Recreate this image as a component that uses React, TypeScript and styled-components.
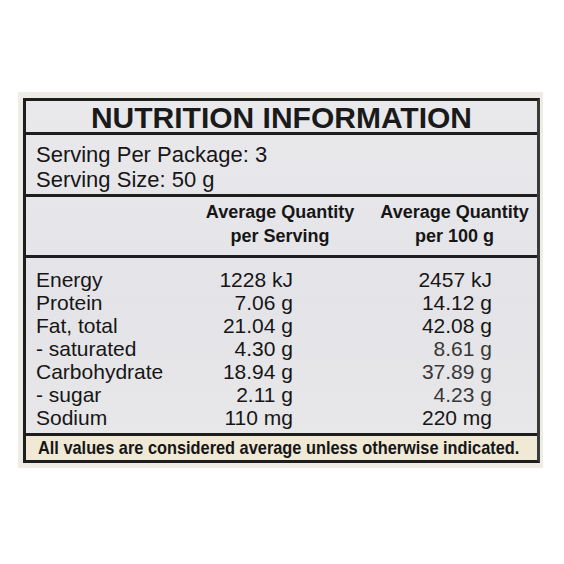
import React from "react";
import styled, { createGlobalStyle } from "styled-components";

const GlobalStyle = createGlobalStyle`
  html, body {
    margin: 0;
    padding: 0;
    background: #ffffff;
  }
  body {
    font-family: "Liberation Sans", Arial, sans-serif;
    color: #161616;
  }
`;

type Nutrient = {
  name: string;
  perServing: string;
  per100: string;
  light?: boolean;
};

const nutrients: Nutrient[] = [
  { name: "Energy", perServing: "1228 kJ", per100: "2457 kJ" },
  { name: "Protein", perServing: "7.06 g", per100: "14.12 g" },
  { name: "Fat, total", perServing: "21.04 g", per100: "42.08 g" },
  { name: "- saturated", perServing: "4.30 g", per100: "8.61 g", light: true },
  { name: "Carbohydrate", perServing: "18.94 g", per100: "37.89 g", light: true },
  { name: "- sugar", perServing: "2.11 g", per100: "4.23 g", light: true },
  { name: "Sodium", perServing: "110 mg", per100: "220 mg" },
];

const App = () => {
  return (
    <>
      <GlobalStyle />
      <Paper>
        <Frame>
          <Title>NUTRITION INFORMATION</Title>
          <Serving>
            <div>Serving Per Package: 3</div>
            <div>Serving Size: 50 g</div>
          </Serving>
          <HeaderRow>
            <span />
            <HeadCell>
              Average Quantity
              <br />
              per Serving
            </HeadCell>
            <HeadCell className="last">
              Average Quantity
              <br />
              per 100 g
            </HeadCell>
          </HeaderRow>
          <Body>
            {nutrients.map((n) => (
              <Row key={n.name}>
                <Name>{n.name}</Name>
                <Value>{n.perServing}</Value>
                <Value $light={n.light}>{n.per100}</Value>
              </Row>
            ))}
          </Body>
          <Footer>
            <span>All values are considered average unless otherwise indicated.</span>
          </Footer>
        </Frame>
      </Paper>
    </>
  );
};

export default App;

const Paper = styled.div`
  margin: 92px 0 0 18px;
  width: 525px;
  height: 376px;
  box-sizing: border-box;
  padding: 6px 3px 5px 5px;
  background: #eeede5;
`;

const Frame = styled.div`
  border: 3px solid #1e1e1e;
  border-right-color: #3a3a3a;
  background: linear-gradient(180deg, #e9e9ec 0%, #e4e4e8 55%, #e8e8ea 100%);
  display: flex;
  flex-direction: column;
`;

const Title = styled.div`
  height: 34px;
  box-sizing: border-box;
  padding-top: 3px;
  line-height: 28px;
  font-size: 30px;
  font-weight: 700;
  text-align: center;
  color: #1a1a1a;
  border-bottom: 3px solid #1e1e1e;
`;

const Serving = styled.div`
  height: 62px;
  box-sizing: border-box;
  padding: 7px 0 0 10px;
  font-size: 22px;
  line-height: 25px;
  border-bottom: 3px solid #1e1e1e;
`;

const HeaderRow = styled.div`
  height: 61px;
  box-sizing: border-box;
  padding-top: 3px;
  display: grid;
  grid-template-columns: 170px 168px 1fr;
  border-bottom: 3px solid #1e1e1e;
`;

const HeadCell = styled.div`
  font-size: 18px;
  font-weight: 700;
  line-height: 24px;
  text-align: center;

  &.last {
    padding-left: 8px;
  }
`;

const Body = styled.div`
  height: 178px;
  box-sizing: border-box;
  padding-top: 10px;
  border-bottom: 3px solid #1e1e1e;
`;

const Row = styled.div`
  display: grid;
  grid-template-columns: 170px 97px 199px 1fr;
  font-size: 21px;
  line-height: 23px;
`;

const Name = styled.div`
  padding-left: 10px;
  white-space: nowrap;
`;

const Value = styled.div<{ $light?: boolean }>`
  text-align: right;
  white-space: nowrap;
  color: ${(p) => (p.$light ? "#383838" : "#161616")};
`;

const Footer = styled.div`
  height: 24px;
  background: #efe9d6;
  font-size: 19px;
  font-weight: 700;
  line-height: 24px;
  padding-left: 12px;
  white-space: nowrap;
  overflow: hidden;

  span {
    display: inline-block;
    transform-origin: left center;
    transform: scaleX(0.86);
  }
`;
